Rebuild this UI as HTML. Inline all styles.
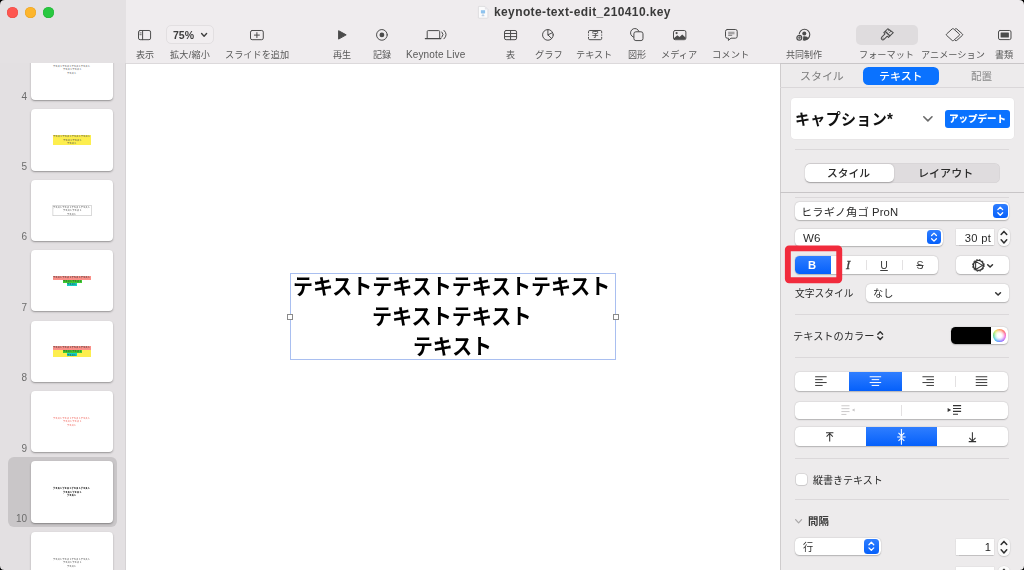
<!DOCTYPE html>
<html lang="ja"><head><meta charset="utf-8"><title>keynote-text-edit_210410.key</title>
<style>
html,body{margin:0;padding:0}
body{width:1024px;height:570px;position:relative;overflow:hidden;background:#fff;font-family:"Liberation Sans",sans-serif}
.sec{position:absolute;left:0;top:0;width:0;height:0}
.b{position:absolute;box-sizing:border-box}
.jt{position:absolute;display:block}
.jt svg{position:absolute;left:0;top:0;display:block;overflow:visible}
.jt svg text{font-family:"Liberation Sans","Noto Sans CJK JP",sans-serif;font-size:1000px;white-space:pre}
.lt{position:absolute;white-space:nowrap;display:block;will-change:transform}
.ic{position:absolute;display:block;overflow:visible}
.thumb{background:#fff;border-radius:4px;box-shadow:0 1px 2px rgba(0,0,0,.3),0 0.5px 0.5px rgba(0,0,0,.12)}
.pop{background:#fff;border-radius:4.5px;box-shadow:0 0.5px 1.3px rgba(0,0,0,.23),0 0 0 0.5px rgba(0,0,0,.05)}
.sep{background:#dbd8da;height:1px}
.blue{background:linear-gradient(#2f7eff,#0560fb)}

</style></head>
<body>
<div class="sec" id="navigator">
<div class="b " style="left:0.00px;top:0.00px;width:125.50px;height:570.00px;background:#e3e0e2;"></div>
<div class="b " style="left:125.00px;top:63.00px;width:0.80px;height:507.00px;background:#d6d3d5;"></div>
<div class="b " style="left:8.20px;top:456.80px;width:108.70px;height:70.00px;background:#c9c6c8;border-radius:6px;"></div>
<div class="b thumb" style="left:31.30px;top:38.90px;width:81.40px;height:61.30px;"></div>
<span class="lt" style="top:91px;font-size:10.00px;line-height:11px;height:11px;color:#6c6c6c;font-weight:400;left:-372.60px;width:400px;text-align:right;">4</span>
<span class="jt" style="left:53.26px;top:64.77px;width:37.60px;height:3.06px;"><svg width="37.60" height="3.06" viewBox="0 -950 16000 1300" preserveAspectRatio="none" fill="#555"><text x="0" y="0" font-size="1000" font-weight="500">テキストテキストテキストテキスト</text></svg></span>
<span class="jt" style="left:62.66px;top:68.47px;width:18.80px;height:3.06px;"><svg width="18.80" height="3.06" viewBox="0 -950 8000 1300" preserveAspectRatio="none" fill="#555"><text x="0" y="0" font-size="1000" font-weight="500">テキストテキスト</text></svg></span>
<span class="jt" style="left:67.36px;top:71.97px;width:9.40px;height:3.06px;"><svg width="9.40" height="3.06" viewBox="0 -950 4000 1300" preserveAspectRatio="none" fill="#555"><text x="0" y="0" font-size="1000" font-weight="500">テキスト</text></svg></span>
<div class="b thumb" style="left:31.30px;top:109.30px;width:81.40px;height:61.30px;"></div>
<span class="lt" style="top:161px;font-size:10.00px;line-height:11px;height:11px;color:#6c6c6c;font-weight:400;left:-372.60px;width:400px;text-align:right;">5</span>
<div class="b " style="left:53.10px;top:135.20px;width:38.20px;height:10.10px;background:#fdee4e;"></div>
<span class="jt" style="left:53.26px;top:135.17px;width:37.60px;height:3.06px;"><svg width="37.60" height="3.06" viewBox="0 -950 16000 1300" preserveAspectRatio="none" fill="#444"><text x="0" y="0" font-size="1000" font-weight="500">テキストテキストテキストテキスト</text></svg></span>
<span class="jt" style="left:62.66px;top:138.87px;width:18.80px;height:3.06px;"><svg width="18.80" height="3.06" viewBox="0 -950 8000 1300" preserveAspectRatio="none" fill="#444"><text x="0" y="0" font-size="1000" font-weight="500">テキストテキスト</text></svg></span>
<span class="jt" style="left:67.36px;top:142.37px;width:9.40px;height:3.06px;"><svg width="9.40" height="3.06" viewBox="0 -950 4000 1300" preserveAspectRatio="none" fill="#444"><text x="0" y="0" font-size="1000" font-weight="500">テキスト</text></svg></span>
<div class="b thumb" style="left:31.30px;top:179.70px;width:81.40px;height:61.30px;"></div>
<span class="lt" style="top:231px;font-size:10.00px;line-height:11px;height:11px;color:#6c6c6c;font-weight:400;left:-372.60px;width:400px;text-align:right;">6</span>
<svg class="ic" style="left:0.00px;top:0.00px;" width="1024.00" height="570.00" viewBox="0 0 1024 570"><rect x="52.9" y="205.60" width="38.5" height="10.1" fill="none" stroke="#c2c2c2" stroke-width="0.6"/></svg>
<span class="jt" style="left:53.26px;top:205.57px;width:37.60px;height:3.06px;"><svg width="37.60" height="3.06" viewBox="0 -950 16000 1300" preserveAspectRatio="none" fill="#555"><text x="0" y="0" font-size="1000" font-weight="500">テキストテキストテキストテキスト</text></svg></span>
<span class="jt" style="left:62.66px;top:209.27px;width:18.80px;height:3.06px;"><svg width="18.80" height="3.06" viewBox="0 -950 8000 1300" preserveAspectRatio="none" fill="#555"><text x="0" y="0" font-size="1000" font-weight="500">テキストテキスト</text></svg></span>
<span class="jt" style="left:67.36px;top:212.77px;width:9.40px;height:3.06px;"><svg width="9.40" height="3.06" viewBox="0 -950 4000 1300" preserveAspectRatio="none" fill="#555"><text x="0" y="0" font-size="1000" font-weight="500">テキスト</text></svg></span>
<div class="b thumb" style="left:31.30px;top:250.10px;width:81.40px;height:61.30px;"></div>
<span class="lt" style="top:302px;font-size:10.00px;line-height:11px;height:11px;color:#6c6c6c;font-weight:400;left:-372.60px;width:400px;text-align:right;">7</span>
<div class="b " style="left:53.40px;top:275.90px;width:37.30px;height:3.70px;background:#fb8f88;"></div>
<div class="b " style="left:62.70px;top:279.60px;width:19.00px;height:3.50px;background:#3fce32;"></div>
<div class="b " style="left:67.30px;top:283.10px;width:9.60px;height:2.60px;background:#15cfc4;"></div>
<span class="jt" style="left:53.26px;top:275.97px;width:37.60px;height:3.06px;"><svg width="37.60" height="3.06" viewBox="0 -950 16000 1300" preserveAspectRatio="none" fill="#333"><text x="0" y="0" font-size="1000" font-weight="500">テキストテキストテキストテキスト</text></svg></span>
<span class="jt" style="left:62.66px;top:279.67px;width:18.80px;height:3.06px;"><svg width="18.80" height="3.06" viewBox="0 -950 8000 1300" preserveAspectRatio="none" fill="#333"><text x="0" y="0" font-size="1000" font-weight="500">テキストテキスト</text></svg></span>
<span class="jt" style="left:67.36px;top:283.17px;width:9.40px;height:3.06px;"><svg width="9.40" height="3.06" viewBox="0 -950 4000 1300" preserveAspectRatio="none" fill="#333"><text x="0" y="0" font-size="1000" font-weight="500">テキスト</text></svg></span>
<div class="b thumb" style="left:31.30px;top:320.50px;width:81.40px;height:61.30px;"></div>
<span class="lt" style="top:372px;font-size:10.00px;line-height:11px;height:11px;color:#6c6c6c;font-weight:400;left:-372.60px;width:400px;text-align:right;">8</span>
<div class="b " style="left:53.10px;top:345.90px;width:38.20px;height:11.00px;background:#fdee4e;"></div>
<div class="b " style="left:53.40px;top:345.90px;width:37.30px;height:3.70px;background:#fb8f88;"></div>
<div class="b " style="left:62.70px;top:349.60px;width:19.00px;height:3.50px;background:#3fce32;"></div>
<div class="b " style="left:67.30px;top:353.10px;width:9.60px;height:2.60px;background:#15cfc4;"></div>
<span class="jt" style="left:53.26px;top:346.37px;width:37.60px;height:3.06px;"><svg width="37.60" height="3.06" viewBox="0 -950 16000 1300" preserveAspectRatio="none" fill="#333"><text x="0" y="0" font-size="1000" font-weight="500">テキストテキストテキストテキスト</text></svg></span>
<span class="jt" style="left:62.66px;top:350.07px;width:18.80px;height:3.06px;"><svg width="18.80" height="3.06" viewBox="0 -950 8000 1300" preserveAspectRatio="none" fill="#333"><text x="0" y="0" font-size="1000" font-weight="500">テキストテキスト</text></svg></span>
<span class="jt" style="left:67.36px;top:353.57px;width:9.40px;height:3.06px;"><svg width="9.40" height="3.06" viewBox="0 -950 4000 1300" preserveAspectRatio="none" fill="#333"><text x="0" y="0" font-size="1000" font-weight="500">テキスト</text></svg></span>
<div class="b thumb" style="left:31.30px;top:390.90px;width:81.40px;height:61.30px;"></div>
<span class="lt" style="top:443px;font-size:10.00px;line-height:11px;height:11px;color:#6c6c6c;font-weight:400;left:-372.60px;width:400px;text-align:right;">9</span>
<span class="jt" style="left:53.26px;top:416.77px;width:37.60px;height:3.06px;"><svg width="37.60" height="3.06" viewBox="0 -950 16000 1300" preserveAspectRatio="none" fill="#f0655c"><text x="0" y="0" font-size="1000" font-weight="500">テキストテキストテキストテキスト</text></svg></span>
<span class="jt" style="left:62.66px;top:420.47px;width:18.80px;height:3.06px;"><svg width="18.80" height="3.06" viewBox="0 -950 8000 1300" preserveAspectRatio="none" fill="#f0655c"><text x="0" y="0" font-size="1000" font-weight="500">テキストテキスト</text></svg></span>
<span class="jt" style="left:67.36px;top:423.97px;width:9.40px;height:3.06px;"><svg width="9.40" height="3.06" viewBox="0 -950 4000 1300" preserveAspectRatio="none" fill="#f0655c"><text x="0" y="0" font-size="1000" font-weight="500">テキスト</text></svg></span>
<div class="b thumb" style="left:31.30px;top:461.30px;width:81.40px;height:61.30px;"></div>
<span class="lt" style="top:513px;font-size:10.00px;line-height:11px;height:11px;color:#6c6c6c;font-weight:400;left:-372.60px;width:400px;text-align:right;">10</span>
<span class="jt" style="left:53.25px;top:487.17px;width:37.60px;height:3.06px;"><svg width="37.60" height="3.06" viewBox="0 -950 16000 1300" preserveAspectRatio="none" fill="#000"><text x="0" y="0" font-size="1000" font-weight="900">テキストテキストテキストテキスト</text></svg></span>
<span class="jt" style="left:62.65px;top:490.87px;width:18.80px;height:3.06px;"><svg width="18.80" height="3.06" viewBox="0 -950 8000 1300" preserveAspectRatio="none" fill="#000"><text x="0" y="0" font-size="1000" font-weight="900">テキストテキスト</text></svg></span>
<span class="jt" style="left:67.35px;top:494.37px;width:9.40px;height:3.06px;"><svg width="9.40" height="3.06" viewBox="0 -950 4000 1300" preserveAspectRatio="none" fill="#000"><text x="0" y="0" font-size="1000" font-weight="900">テキスト</text></svg></span>
<div class="b thumb" style="left:31.30px;top:531.70px;width:81.40px;height:61.30px;"></div>
<span class="jt" style="left:53.26px;top:557.57px;width:37.60px;height:3.06px;"><svg width="37.60" height="3.06" viewBox="0 -950 16000 1300" preserveAspectRatio="none" fill="#555"><text x="0" y="0" font-size="1000" font-weight="500">テキストテキストテキストテキスト</text></svg></span>
<span class="jt" style="left:62.66px;top:561.27px;width:18.80px;height:3.06px;"><svg width="18.80" height="3.06" viewBox="0 -950 8000 1300" preserveAspectRatio="none" fill="#555"><text x="0" y="0" font-size="1000" font-weight="500">テキストテキスト</text></svg></span>
<span class="jt" style="left:67.36px;top:564.77px;width:9.40px;height:3.06px;"><svg width="9.40" height="3.06" viewBox="0 -950 4000 1300" preserveAspectRatio="none" fill="#555"><text x="0" y="0" font-size="1000" font-weight="500">テキスト</text></svg></span>
</div>
<div class="sec" id="canvas">
<div class="b " style="left:290.30px;top:273.00px;width:325.30px;height:87.00px;border:1px solid #a9bff0;"></div>
<div class="b " style="left:287.40px;top:313.90px;width:5.90px;height:5.90px;background:#fff;border:0.8px solid #8a8a8a;"></div>
<div class="b " style="left:612.70px;top:313.90px;width:5.90px;height:5.90px;background:#fff;border:0.8px solid #8a8a8a;"></div>
<span class="jt" style="left:292.70px;top:273.98px;width:319.72px;height:27.94px;"><svg width="319.72" height="27.94" viewBox="0 -950 16000 1300" preserveAspectRatio="none" fill="#000"><text x="0" y="0" font-size="1000" font-weight="700">テキストテキストテキストテキスト</text></svg></span>
<span class="jt" style="left:372.24px;top:304.08px;width:160.84px;height:27.94px;"><svg width="160.84" height="27.94" viewBox="0 -950 8000 1300" preserveAspectRatio="none" fill="#000"><text x="0" y="0" font-size="1000" font-weight="700">テキストテキスト</text></svg></span>
<span class="jt" style="left:412.61px;top:334.18px;width:79.49px;height:27.94px;"><svg width="79.49" height="27.94" viewBox="0 -950 4000 1300" preserveAspectRatio="none" fill="#000"><text x="0" y="0" font-size="1000" font-weight="700">テキスト</text></svg></span>
</div>
<div class="sec" id="toolbar">
<div class="b " style="left:125.50px;top:0.00px;width:898.50px;height:63.00px;background:#efecee;"></div>
<div class="b " style="left:0.00px;top:0.00px;width:125.50px;height:63.00px;background:#e4e1e3;"></div>
<div class="b " style="left:125.50px;top:62.70px;width:654.50px;height:0.90px;background:#dcd9db;"></div>
<div class="b " style="left:7.00px;top:7.00px;width:11.00px;height:11.00px;background:#fe5650;border-radius:50%;box-shadow:inset 0 0 0 0.5px #ec4a44;"></div>
<div class="b " style="left:25.00px;top:7.00px;width:11.00px;height:11.00px;background:#fdb52c;border-radius:50%;box-shadow:inset 0 0 0 0.5px #e9a222;"></div>
<div class="b " style="left:43.10px;top:7.00px;width:11.00px;height:11.00px;background:#28c840;border-radius:50%;box-shadow:inset 0 0 0 0.5px #20b234;"></div>
<svg class="ic" style="left:138.10px;top:29.60px;" width="13.10" height="10.20" viewBox="0 0 13.1 10.2"><rect x="0.5" y="0.5" width="12.1" height="9.2" rx="1.6" fill="none" stroke="#4b4b4b" stroke-width="1" stroke-linecap="round" stroke-linejoin="round"/><path d="M4.6 0.5V9.7" fill="none" stroke="#4b4b4b" stroke-width="1" stroke-linecap="round" stroke-linejoin="round"/><path d="M1.9 2.9h1.3M1.9 4.7h1.3" fill="none" stroke="#4b4b4b" stroke-width="0.8" stroke-linecap="round" stroke-linejoin="round"/></svg>
<span class="jt" style="left:136.10px;top:49.20px;width:18.20px;height:11.83px;"><svg width="18.20" height="11.83" viewBox="0 -950 2000 1300" preserveAspectRatio="none" fill="#585858"><text x="0" y="0" font-size="1000" font-weight="400">表示</text></svg></span>
<div class="b " style="left:165.50px;top:25.40px;width:48.40px;height:19.10px;border:1px solid #e2dfe1;border-radius:5px;background:#f1eef0;"></div>
<span class="lt" style="top:29px;font-size:10.50px;line-height:12px;height:12px;color:#3e3e3e;font-weight:700;left:173.00px;">75%</span>
<svg class="ic" style="left:201.30px;top:33.40px;" width="6.20" height="3.90" viewBox="0 0 6.2 3.9"><path d="M0.6 0.6L3.1 3.2L5.6 0.6" fill="none" stroke="#3e3e3e" stroke-width="1.4" stroke-linecap="round" stroke-linejoin="round"/></svg>
<span class="jt" style="left:169.77px;top:49.20px;width:39.92px;height:11.83px;"><svg width="39.92" height="11.83" viewBox="0 -950 4390 1300" preserveAspectRatio="none" fill="#585858"><text x="0" y="0" font-size="1000" font-weight="400" textLength="4390" lengthAdjust="spacing">拡大/縮小</text></svg></span>
<svg class="ic" style="left:250.30px;top:29.60px;" width="13.80" height="10.20" viewBox="0 0 13.8 10.2"><rect x="0.5" y="0.5" width="12.8" height="9.2" rx="1.6" fill="none" stroke="#4b4b4b" stroke-width="1" stroke-linecap="round" stroke-linejoin="round"/><path d="M4.4 5.1h5M6.9 2.6v5" fill="none" stroke="#4b4b4b" stroke-width="1" stroke-linecap="round" stroke-linejoin="round"/></svg>
<span class="jt" style="left:225.45px;top:49.20px;width:64.22px;height:11.83px;"><svg width="64.22" height="11.83" viewBox="0 -950 7000 1300" preserveAspectRatio="none" fill="#585858"><text x="0" y="0" font-size="1000" font-weight="400">スライドを追加</text></svg></span>
<svg class="ic" style="left:338.00px;top:30.10px;" width="9.00" height="9.80" viewBox="0 0 9 9.8"><path d="M0.6 0.7L8.2 4.85L0.6 9.1Z" fill="#4b4b4b" stroke="#4b4b4b" stroke-width="1" stroke-linejoin="round"/></svg>
<span class="jt" style="left:332.61px;top:49.20px;width:18.20px;height:11.83px;"><svg width="18.20" height="11.83" viewBox="0 -950 2000 1300" preserveAspectRatio="none" fill="#585858"><text x="0" y="0" font-size="1000" font-weight="400">再生</text></svg></span>
<svg class="ic" style="left:375.90px;top:28.90px;" width="11.80" height="11.80" viewBox="0 0 11.8 11.8"><circle cx="5.9" cy="5.9" r="5.35" fill="none" stroke="#4b4b4b" stroke-width="1" stroke-linecap="round" stroke-linejoin="round"/><circle cx="5.9" cy="5.9" r="2.4" fill="#4b4b4b"/></svg>
<span class="jt" style="left:372.98px;top:49.20px;width:18.20px;height:11.83px;"><svg width="18.20" height="11.83" viewBox="0 -950 2000 1300" preserveAspectRatio="none" fill="#585858"><text x="0" y="0" font-size="1000" font-weight="400">記録</text></svg></span>
<svg class="ic" style="left:425.30px;top:29.90px;" width="22.00" height="9.50" viewBox="0 0 22 9.5"><path d="M2.2 7.9V1.6Q2.2 0.6 3.2 0.6H13.7Q14.7 0.6 14.7 1.6V7.9" fill="none" stroke="#4b4b4b" stroke-width="1" stroke-linecap="round" stroke-linejoin="round"/><path d="M0.3 8.6H15.9" fill="none" stroke="#4b4b4b" stroke-width="1.1" stroke-linecap="round" stroke-linejoin="round"/><path d="M16.9 2.0Q19.4 4.6 16.9 7.2" fill="none" stroke="#4b4b4b" stroke-width="1" stroke-linecap="round" stroke-linejoin="round"/><path d="M19.0 0.4Q23.4 4.6 19.0 8.8" fill="none" stroke="#4b4b4b" stroke-width="1" stroke-linecap="round" stroke-linejoin="round"/></svg>
<span class="lt" style="top:49px;font-size:10.00px;line-height:11px;height:11px;color:#585858;font-weight:400;letter-spacing:0.130px;left:406.00px;">Keynote Live</span>
<svg class="ic" style="left:504.10px;top:29.60px;" width="13.10" height="10.20" viewBox="0 0 13.1 10.2"><rect x="0.5" y="0.5" width="12.1" height="9.2" rx="1.6" fill="none" stroke="#4b4b4b" stroke-width="1" stroke-linecap="round" stroke-linejoin="round"/><path d="M0.5 3.5H12.6M0.5 6.6H12.6M6.55 0.5V9.7" fill="none" stroke="#4b4b4b" stroke-width="1" stroke-linecap="round" stroke-linejoin="round"/></svg>
<span class="jt" style="left:505.97px;top:49.20px;width:9.10px;height:11.83px;"><svg width="9.10" height="11.83" viewBox="0 -950 1000 1300" preserveAspectRatio="none" fill="#585858"><text x="0" y="0" font-size="1000" font-weight="400">表</text></svg></span>
<svg class="ic" style="left:542.00px;top:28.90px;" width="11.80" height="11.80" viewBox="0 0 11.8 11.8"><circle cx="5.9" cy="5.9" r="5.35" fill="none" stroke="#4b4b4b" stroke-width="1" stroke-linecap="round" stroke-linejoin="round"/><path d="M5.9 0.6V5.9L9.7 9.6M5.9 5.9L10.6 3.6" fill="none" stroke="#4b4b4b" stroke-width="1" stroke-linecap="round" stroke-linejoin="round"/></svg>
<span class="jt" style="left:534.72px;top:49.20px;width:27.69px;height:11.83px;"><svg width="27.69" height="11.83" viewBox="0 -950 3000 1300" preserveAspectRatio="none" fill="#585858"><text x="0" y="0" font-size="1000" font-weight="400">グラフ</text></svg></span>
<svg class="ic" style="left:587.80px;top:29.60px;" width="14.20" height="10.20" viewBox="0 0 14.2 10.2"><path d="M0.5 2.9V1.8Q0.5 0.5 1.8 0.5H12.4Q13.7 0.5 13.7 1.8V2.9M0.5 7.3V8.4Q0.5 9.7 1.8 9.7H12.4Q13.7 9.7 13.7 8.4V7.3M0.5 4.9V5.3M13.7 4.9V5.3" fill="none" stroke="#4b4b4b" stroke-width="1" stroke-linecap="round" stroke-linejoin="round"/></svg>
<span class="jt" style="left:591.59px;top:31.33px;width:6.60px;height:8.58px;"><svg width="6.60" height="8.58" viewBox="0 -950 1000 1300" preserveAspectRatio="none" fill="#4b4b4b"><text x="0" y="0" font-size="1000" font-weight="700">字</text></svg></span>
<span class="jt" style="left:576.36px;top:49.20px;width:36.58px;height:11.83px;"><svg width="36.58" height="11.83" viewBox="0 -950 4000 1300" preserveAspectRatio="none" fill="#585858"><text x="0" y="0" font-size="1000" font-weight="400">テキスト</text></svg></span>
<svg class="ic" style="left:630.40px;top:27.60px;" width="13.60" height="13.20" viewBox="0 0 13.6 13.2"><circle cx="4.9" cy="4.9" r="4.35" fill="none" stroke="#4b4b4b" stroke-width="1" stroke-linecap="round" stroke-linejoin="round"/><rect x="3.9" y="3.8" width="9.1" height="8.8" rx="2" fill="#efecee" stroke="#4b4b4b" stroke-width="1"/></svg>
<span class="jt" style="left:628.35px;top:49.20px;width:18.20px;height:11.83px;"><svg width="18.20" height="11.83" viewBox="0 -950 2000 1300" preserveAspectRatio="none" fill="#585858"><text x="0" y="0" font-size="1000" font-weight="400">図形</text></svg></span>
<svg class="ic" style="left:673.00px;top:29.60px;" width="13.40" height="10.20" viewBox="0 0 13.4 10.2"><rect x="0.5" y="0.5" width="12.4" height="9.2" rx="1.6" fill="none" stroke="#4b4b4b" stroke-width="1" stroke-linecap="round" stroke-linejoin="round"/><path d="M0.9 8.2L4.3 5.2L6.6 7L9.2 4.6L12.5 7.6V9.2H0.9Z" fill="#4b4b4b"/><circle cx="3.6" cy="3.1" r="1.1" fill="#4b4b4b"/></svg>
<span class="jt" style="left:661.09px;top:49.20px;width:36.87px;height:11.83px;"><svg width="36.87" height="11.83" viewBox="0 -950 4000 1300" preserveAspectRatio="none" fill="#585858"><text x="0" y="0" font-size="1000" font-weight="400">メディア</text></svg></span>
<svg class="ic" style="left:724.60px;top:29.20px;" width="12.80" height="11.40" viewBox="0 0 12.8 11.4"><path d="M2.3 0.5H10.4Q12.2 0.5 12.2 2.3V7.4Q12.2 9.2 10.4 9.2H6.0L3.4 11.4V9.2H2.3Q0.5 9.2 0.5 7.4V2.3Q0.5 0.5 2.3 0.5Z" fill="none" stroke="#4b4b4b" stroke-width="1" stroke-linecap="round" stroke-linejoin="round"/><path d="M3.2 3.2H9.5M3.2 4.8H9.5M3.2 6.4H7.2" fill="none" stroke="#8d8b8c" stroke-width="1.1"/></svg>
<span class="jt" style="left:712.16px;top:49.20px;width:37.30px;height:11.83px;"><svg width="37.30" height="11.83" viewBox="0 -950 4000 1300" preserveAspectRatio="none" fill="#585858"><text x="0" y="0" font-size="1000" font-weight="400">コメント</text></svg></span>
<svg class="ic" style="left:796.00px;top:28.90px;" width="14.60" height="12.60" viewBox="0 0 14.6 12.6"><circle cx="8.5" cy="5.6" r="5.3" fill="none" stroke="#4b4b4b" stroke-width="1.1" stroke-linecap="round" stroke-linejoin="round"/><circle cx="8.3" cy="4.4" r="2.0" fill="#4b4b4b"/><path d="M4.3 9.5Q5.6 7.3 8.5 7.3Q11.4 7.3 12.7 9.5Q11.0 11.5 8.5 11.5Q6.0 11.5 4.3 9.5Z" fill="#4b4b4b"/><circle cx="3.3" cy="8.8" r="3.9" fill="#efecee"/><circle cx="3.3" cy="8.8" r="2.45" fill="none" stroke="#4b4b4b" stroke-width="1.2" stroke-linecap="round" stroke-linejoin="round"/><path d="M2.0 8.8H4.6M3.3 7.5V10.1" fill="none" stroke="#4b4b4b" stroke-width="0.8" stroke-linecap="round" stroke-linejoin="round"/></svg>
<span class="jt" style="left:785.98px;top:49.20px;width:36.04px;height:11.83px;"><svg width="36.04" height="11.83" viewBox="0 -950 4000 1300" preserveAspectRatio="none" fill="#585858"><text x="0" y="0" font-size="1000" font-weight="400">共同制作</text></svg></span>
<div class="b " style="left:856.20px;top:25.00px;width:61.60px;height:19.90px;background:#dfdcde;border-radius:5px;"></div>
<svg class="ic" style="left:880.30px;top:27.80px;" width="13.00" height="13.40" viewBox="0 0 13 13.4"><g transform="rotate(45 6.5 6.7)"><path d="M3.2 1.6L9.8 0.4V5.2H3.2Z" fill="none" stroke="#4b4b4b" stroke-width="1" stroke-linecap="round" stroke-linejoin="round"/><path d="M5.2 1.4V2.8M7.2 1.0V3.4" fill="none" stroke="#4b4b4b" stroke-width="0.8" stroke-linecap="round" stroke-linejoin="round"/><path d="M3.2 5.2H9.8V7.2H8.1V11.8Q8.1 13.4 6.5 13.4Q4.9 13.4 4.9 11.8V7.2H3.2Z" fill="none" stroke="#4b4b4b" stroke-width="1" stroke-linecap="round" stroke-linejoin="round"/><circle cx="6.5" cy="11.6" r="0.55" fill="#4b4b4b"/></g></svg>
<span class="jt" style="left:859.11px;top:49.20px;width:55.03px;height:11.83px;"><svg width="55.03" height="11.83" viewBox="0 -950 6000 1300" preserveAspectRatio="none" fill="#585858"><text x="0" y="0" font-size="1000" font-weight="400">フォーマット</text></svg></span>
<svg class="ic" style="left:945.60px;top:28.10px;" width="17.40" height="13.40" viewBox="0 0 17.4 13.4"><path d="M9.3 0.9Q10 0.3 10.7 0.9L16.4 6Q17.1 6.7 16.4 7.4L10.7 12.5Q10 13.1 9.3 12.5" fill="none" stroke="#4b4b4b" stroke-width="1" stroke-linecap="round" stroke-linejoin="round"/><path d="M6.2 0.9Q6.9 0.3 7.6 0.9L13.3 6Q14 6.7 13.3 7.4L7.6 12.5Q6.9 13.1 6.2 12.5L0.6 7.4Q-0.1 6.7 0.6 6Z" fill="#efecee" stroke="#4b4b4b" stroke-width="1" stroke-linejoin="round"/></svg>
<span class="jt" style="left:921.09px;top:49.20px;width:64.27px;height:11.83px;"><svg width="64.27" height="11.83" viewBox="0 -950 7000 1300" preserveAspectRatio="none" fill="#585858"><text x="0" y="0" font-size="1000" font-weight="400">アニメーション</text></svg></span>
<svg class="ic" style="left:998.10px;top:30.10px;" width="13.50" height="10.10" viewBox="0 0 13.5 10.1"><rect x="0.5" y="0.5" width="12.5" height="9.1" rx="1.5" fill="none" stroke="#4b4b4b" stroke-width="1" stroke-linecap="round" stroke-linejoin="round"/><rect x="2.6" y="2.6" width="8.3" height="4.9" rx="0.5" fill="#4b4b4b"/></svg>
<span class="jt" style="left:994.75px;top:49.20px;width:18.20px;height:11.83px;"><svg width="18.20" height="11.83" viewBox="0 -950 2000 1300" preserveAspectRatio="none" fill="#585858"><text x="0" y="0" font-size="1000" font-weight="400">書類</text></svg></span>
<svg class="ic" style="left:478.20px;top:6.20px;" width="10.40" height="12.60" viewBox="0 0 10.4 12.6"><path d="M1 0.4H6.9L9.9 3.4V11.6Q9.9 12.2 9.3 12.2H1Q0.4 12.2 0.4 11.6V1Q0.4 0.4 1 0.4Z" fill="#fbfbfc" stroke="#d0cfd2" stroke-width="0.6"/><path d="M6.9 0.4V3.4H9.9Z" fill="#e4e4e8"/><rect x="2.9" y="4.2" width="4.2" height="3.2" fill="#8fc3ee"/><path d="M5 7.4V9.6M3.6 9.7H6.4" stroke="#9bb7d6" stroke-width="0.7" fill="none"/></svg>
<span class="lt" style="top:5px;font-size:12.00px;line-height:14px;height:14px;color:#3a3a3a;font-weight:700;letter-spacing:0.385px;left:494.20px;">keynote-text-edit_210410.key</span>
</div>
<div class="sec" id="inspector">
<div class="b " style="left:780.00px;top:63.00px;width:244.00px;height:507.00px;background:#edebec;"></div>
<div class="b " style="left:779.60px;top:63.00px;width:1.00px;height:507.00px;background:#cfcccd;"></div>
<div class="b " style="left:780.00px;top:62.60px;width:244.00px;height:1.00px;background:#c9c6c8;"></div>
<span class="jt" style="left:799.95px;top:69.83px;width:43.92px;height:13.78px;"><svg width="43.92" height="13.78" viewBox="0 -950 4000 1300" preserveAspectRatio="none" fill="#7b7b7b"><text x="0" y="0" font-size="1000" font-weight="400">スタイル</text></svg></span>
<div class="b " style="left:863.40px;top:66.60px;width:75.90px;height:18.40px;background:#0a72ff;border-radius:5.5px;"></div>
<span class="jt" style="left:879.20px;top:69.83px;width:43.97px;height:13.78px;"><svg width="43.97" height="13.78" viewBox="0 -950 4000 1300" preserveAspectRatio="none" fill="#fff"><text x="0" y="0" font-size="1000" font-weight="500">テキスト</text></svg></span>
<span class="jt" style="left:971.01px;top:69.83px;width:21.20px;height:13.78px;"><svg width="21.20" height="13.78" viewBox="0 -950 2000 1300" preserveAspectRatio="none" fill="#8a8a8a"><text x="0" y="0" font-size="1000" font-weight="400">配置</text></svg></span>
<div class="b " style="left:780.00px;top:87.40px;width:244.00px;height:1.00px;background:#dad7d9;"></div>
<div class="b " style="left:790.70px;top:98.20px;width:223.40px;height:40.60px;background:#fff;border-radius:4px;box-shadow:0 0 0 0.5px rgba(0,0,0,.04);"></div>
<span class="jt" style="left:794.73px;top:109.78px;width:97.93px;height:20.28px;"><svg width="97.93" height="20.28" viewBox="0 -950 6507 1300" preserveAspectRatio="none" fill="#111"><text x="0" y="0" font-size="1000" font-weight="700" textLength="6507" lengthAdjust="spacing">キャプション*</text></svg></span>
<svg class="ic" style="left:923.40px;top:116.20px;" width="9.80" height="5.80" viewBox="0 0 9.8 5.8"><path d="M0.8 0.8L4.9 4.9L9.0 0.8" fill="none" stroke="#6a6a6a" stroke-width="1.6" stroke-linecap="round" stroke-linejoin="round"/></svg>
<div class="b " style="left:945.40px;top:109.60px;width:64.20px;height:18.00px;background:#0a72ff;border-radius:3px;"></div>
<span class="jt" style="left:948.86px;top:113.28px;width:57.24px;height:12.48px;"><svg width="57.24" height="12.48" viewBox="0 -950 6000 1300" preserveAspectRatio="none" fill="#fff"><text x="0" y="0" font-size="1000" font-weight="800">アップデート</text></svg></span>
<div class="b sep" style="left:795.20px;top:149.00px;width:214.30px;height:1.00px;"></div>
<div class="b " style="left:804.50px;top:163.40px;width:195.20px;height:19.40px;background:#dfdcde;border-radius:5.5px;box-shadow:inset 0 0 0 0.5px rgba(0,0,0,.05);"></div>
<div class="b " style="left:805.00px;top:163.90px;width:88.60px;height:18.40px;background:#fff;border-radius:5px;box-shadow:0 0.5px 1.5px rgba(0,0,0,.25);"></div>
<span class="jt" style="left:826.54px;top:166.53px;width:43.20px;height:13.78px;"><svg width="43.20" height="13.78" viewBox="0 -950 4000 1300" preserveAspectRatio="none" fill="#2b2b2b"><text x="0" y="0" font-size="1000" font-weight="500">スタイル</text></svg></span>
<span class="jt" style="left:918.27px;top:166.53px;width:55.31px;height:13.78px;"><svg width="55.31" height="13.78" viewBox="0 -950 5000 1300" preserveAspectRatio="none" fill="#2b2b2b"><text x="0" y="0" font-size="1000" font-weight="500">レイアウト</text></svg></span>
<div class="b " style="left:780.00px;top:191.80px;width:244.00px;height:1.00px;background:#c8c5c7;"></div>
<div class="b sep" style="left:795.20px;top:197.20px;width:214.30px;height:1.00px;"></div>
<div class="b pop" style="left:795.00px;top:202.00px;width:213.90px;height:18.00px;"></div>
<span class="jt" style="left:800.82px;top:205.52px;width:97.09px;height:13.52px;"><svg width="97.09" height="13.52" viewBox="0 -950 8600 1300" preserveAspectRatio="none" fill="#2b2b2b"><text x="0" y="0" font-size="1000" font-weight="400" textLength="8600" lengthAdjust="spacing">ヒラギノ角ゴ ProN</text></svg></span>
<div class="b blue" style="left:993.30px;top:203.90px;width:14.50px;height:14.40px;border-radius:3.5px;"></div>
<svg class="ic" style="left:993.30px;top:203.90px;" width="14.50" height="14.40" viewBox="0 0 14.5 14.4"><path d="M4.85 5.60L7.25 3.20L9.65 5.60M4.85 8.80L7.25 11.20L9.65 8.80" fill="none" stroke="#fff" stroke-width="1.3" stroke-linecap="round" stroke-linejoin="round"/></svg>
<div class="b pop" style="left:795.00px;top:228.60px;width:147.50px;height:17.10px;"></div>
<span class="lt" style="top:232px;font-size:11.60px;line-height:12px;height:12px;color:#2b2b2b;font-weight:400;left:803.00px;">W6</span>
<div class="b blue" style="left:927.00px;top:229.90px;width:14.00px;height:14.30px;border-radius:3.5px;"></div>
<svg class="ic" style="left:927.00px;top:229.90px;" width="14.00" height="14.30" viewBox="0 0 14 14.3"><path d="M4.60 5.55L7.00 3.15L9.40 5.55M4.60 8.75L7.00 11.15L9.40 8.75" fill="none" stroke="#fff" stroke-width="1.3" stroke-linecap="round" stroke-linejoin="round"/></svg>
<div class="b " style="left:956.40px;top:228.80px;width:37.80px;height:16.40px;background:#fff;box-shadow:0 0 0 0.5px rgba(0,0,0,.06),0 0.5px 1px rgba(0,0,0,.16);"></div>
<span class="lt" style="top:232px;font-size:11.20px;line-height:12px;height:12px;color:#2b2b2b;font-weight:400;letter-spacing:0.250px;left:591.20px;width:400px;text-align:right;">30 pt</span>
<div class="b " style="left:997.90px;top:228.10px;width:11.90px;height:17.80px;background:#fbfbfb;border-radius:5.5px;box-shadow:0 0.5px 1.2px rgba(0,0,0,.26),0 0 0 0.5px rgba(0,0,0,.04);"></div>
<svg class="ic" style="left:997.90px;top:228.10px;" width="11.90" height="17.80" viewBox="0 0 11.9 17.8"><path d="M3.15 6.50L5.95 3.40L8.75 6.50M3.15 11.80L5.95 14.90L8.75 11.80" fill="none" stroke="#2e2e2e" stroke-width="1.5" stroke-linecap="round" stroke-linejoin="round"/></svg>
<div class="b pop" style="left:794.80px;top:256.00px;width:143.20px;height:18.10px;"></div>
<div class="b blue" style="left:794.80px;top:256.00px;width:36.20px;height:18.10px;border-radius:4.5px 0 0 4.5px;"></div>
<span class="lt" style="top:259px;font-size:11.20px;line-height:12px;height:12px;color:#fff;font-weight:700;left:612.30px;width:400px;text-align:center;">B</span>
<span class="lt" style="top:258px;font-size:12.60px;line-height:14px;height:14px;color:#3c3c3c;font-weight:400;font-style:italic;left:648.00px;width:400px;text-align:center;font-family:'Liberation Serif',serif;-webkit-text-stroke:0.35px #3c3c3c;">I</span>
<span class="lt" style="top:259px;font-size:10.50px;line-height:12px;height:12px;color:#3c3c3c;font-weight:400;left:684.30px;width:400px;text-align:center;text-decoration:underline;text-underline-offset:1px;">U</span>
<span class="lt" style="top:259px;font-size:10.50px;line-height:12px;height:12px;color:#3c3c3c;font-weight:400;left:719.80px;width:400px;text-align:center;text-decoration:line-through;">S</span>
<div class="b " style="left:865.90px;top:259.60px;width:1.00px;height:10.80px;background:#e3e1e2;"></div>
<div class="b " style="left:902.00px;top:259.60px;width:1.00px;height:10.80px;background:#e3e1e2;"></div>
<div class="b pop" style="left:955.90px;top:256.20px;width:53.20px;height:18.00px;"></div>
<svg class="ic" style="left:971.90px;top:258.80px;" width="12.80" height="12.80" viewBox="0 0 12 12"><circle cx="6" cy="6" r="5.55" fill="none" stroke="#333" stroke-width="0.9" stroke-dasharray="1.45 1.456"/><circle cx="6" cy="6" r="4.7" fill="none" stroke="#333" stroke-width="1.3"/><path d="M3.4 2.2L9.9 6L3.4 9.8Z" fill="none" stroke="#333" stroke-width="1.0" stroke-linejoin="round"/></svg>
<svg class="ic" style="left:987.20px;top:263.50px;" width="6.20" height="3.90" viewBox="0 0 6.2 3.9"><path d="M0.7 0.7L3.1 3.1L5.5 0.7" fill="none" stroke="#333" stroke-width="1.5" stroke-linecap="round" stroke-linejoin="round"/></svg>
<svg class="ic" style="left:0.00px;top:0.00px;" width="1024.00" height="570.00" viewBox="0 0 1024 570"><rect x="787.85" y="248.4" width="51.4" height="31.85" rx="1.2" fill="none" stroke="#f12b3c" stroke-width="5.9"/></svg>
<span class="jt" style="left:795.15px;top:286.61px;width:58.58px;height:13.26px;"><svg width="58.58" height="13.26" viewBox="0 -950 6000 1300" preserveAspectRatio="none" fill="#2b2b2b"><text x="0" y="0" font-size="1000" font-weight="400">文字スタイル</text></svg></span>
<div class="b pop" style="left:865.80px;top:284.20px;width:143.30px;height:17.60px;"></div>
<span class="jt" style="left:872.51px;top:286.61px;width:20.39px;height:13.26px;"><svg width="20.39" height="13.26" viewBox="0 -950 2000 1300" preserveAspectRatio="none" fill="#2b2b2b"><text x="0" y="0" font-size="1000" font-weight="400">なし</text></svg></span>
<svg class="ic" style="left:994.70px;top:292.30px;" width="6.20" height="3.90" viewBox="0 0 6.2 3.9"><path d="M0.7 0.7L3.1 3.1L5.5 0.7" fill="none" stroke="#333" stroke-width="1.5" stroke-linecap="round" stroke-linejoin="round"/></svg>
<div class="b sep" style="left:795.20px;top:313.80px;width:214.30px;height:1.00px;"></div>
<span class="jt" style="left:792.65px;top:329.91px;width:81.88px;height:13.26px;"><svg width="81.88" height="13.26" viewBox="0 -950 8000 1300" preserveAspectRatio="none" fill="#2b2b2b"><text x="0" y="0" font-size="1000" font-weight="400">テキストのカラー</text></svg></span>
<svg class="ic" style="left:876.60px;top:331.40px;" width="6.40" height="9.40" viewBox="0 0 6.4 9.4"><path d="M0.8 3.3L3.2 0.8L5.6 3.3M0.8 6.1L3.2 8.6L5.6 6.1" fill="none" stroke="#333" stroke-width="1.4" stroke-linecap="round" stroke-linejoin="round"/></svg>
<div class="b pop" style="left:950.80px;top:326.50px;width:57.70px;height:17.90px;"></div>
<div class="b " style="left:950.80px;top:326.50px;width:39.80px;height:17.90px;background:#000;border-radius:4.5px 0 0 4.5px;"></div>
<div class="b " style="left:993.00px;top:329.10px;width:12.80px;height:12.80px;border-radius:50%;background:conic-gradient(from 0deg,#ff8a3c,#ff4a4a 12%,#f54ad0 27%,#9a55ff 40%,#4b78ff 52%,#35c8e8 64%,#4fdc6a 76%,#d8e640 88%,#ff8a3c);"></div>
<div class="b " style="left:993.00px;top:329.10px;width:12.80px;height:12.80px;border-radius:50%;background:radial-gradient(#fff 22%,rgba(255,255,255,.75) 42%,rgba(255,255,255,.15) 68%,rgba(255,255,255,0) 78%);"></div>
<div class="b sep" style="left:795.20px;top:357.00px;width:214.30px;height:1.00px;"></div>
<div class="b pop" style="left:794.90px;top:372.40px;width:212.90px;height:18.20px;"></div>
<div class="b blue" style="left:848.90px;top:372.40px;width:53.00px;height:18.20px;"></div>
<svg class="ic" style="left:0.00px;top:0.00px;" width="1024.00" height="570.00" viewBox="0 0 1024 570"><path d="M815.15 376.75h11.50M815.15 379.65h7.50M815.15 382.55h11.50M815.15 385.45h7.50" fill="none" stroke="#3c3c3c" stroke-width="1"/><path d="M869.65 376.75h11.50M871.65 379.65h7.50M869.65 382.55h11.50M871.65 385.45h7.50" fill="none" stroke="#fff" stroke-width="1"/><path d="M922.45 376.75h11.50M926.45 379.65h7.50M922.45 382.55h11.50M926.45 385.45h7.50" fill="none" stroke="#3c3c3c" stroke-width="1"/><path d="M975.75 376.75h11.50M975.75 379.65h11.50M975.75 382.55h11.50M975.75 385.45h11.50" fill="none" stroke="#3c3c3c" stroke-width="1"/></svg>
<div class="b " style="left:954.80px;top:376.20px;width:1.00px;height:10.60px;background:#e3e1e2;"></div>
<div class="b pop" style="left:794.90px;top:401.60px;width:212.90px;height:17.60px;"></div>
<div class="b " style="left:901.20px;top:405.00px;width:1.00px;height:10.60px;background:#e3e1e2;"></div>
<svg class="ic" style="left:0.00px;top:0.00px;" width="1024.00" height="570.00" viewBox="0 0 1024 570"><path d="M841.40 405.75h8.10M841.40 408.65h8.10M841.40 411.55h8.10M841.40 414.45h5.00" fill="none" stroke="#c6c4c5" stroke-width="0.9"/><path d="M851.8 410.0L854.6 408.4V411.6Z" fill="#c6c4c5"/><path d="M953.00 405.55h8.10M953.00 408.45h8.10M953.00 411.35h8.10M953.00 414.25h5.00" fill="none" stroke="#333" stroke-width="1.15"/><path d="M947.6 407.9L951.2 410.0L947.6 412.1Z" fill="#333"/></svg>
<div class="b pop" style="left:794.90px;top:427.40px;width:212.90px;height:18.40px;"></div>
<div class="b blue" style="left:866.10px;top:427.40px;width:71.20px;height:18.40px;"></div>
<svg class="ic" style="left:0.00px;top:0.00px;" width="1024.00" height="570.00" viewBox="0 0 1024 570"><path d="M826.00 432.8h7.4M829.70 433.4V441.4M826.60 436.6L829.70 433.5L832.80 436.6" fill="none" stroke="#333" stroke-width="1.05" stroke-linejoin="miter"/><path d="M897.20 436.9h8.4M901.40 429.0V444.8M898.50 432.9L901.40 435.9L904.30 432.9M898.50 440.9L901.40 437.9L904.30 440.9" fill="none" stroke="#fff" stroke-width="1.05" stroke-linejoin="miter"/><path d="M968.70 441.6h7.4M972.40 432.2V441.0M969.30 437.9L972.40 441.0L975.50 437.9" fill="none" stroke="#333" stroke-width="1.05" stroke-linejoin="miter"/></svg>
<div class="b sep" style="left:795.20px;top:457.60px;width:214.30px;height:1.00px;"></div>
<div class="b " style="left:795.50px;top:473.70px;width:11.90px;height:11.80px;background:#fff;border-radius:3px;box-shadow:0 0 0 0.6px rgba(0,0,0,.15),0 0.5px 1px rgba(0,0,0,.08);"></div>
<span class="jt" style="left:812.81px;top:473.71px;width:70.07px;height:13.26px;"><svg width="70.07" height="13.26" viewBox="0 -950 7000 1300" preserveAspectRatio="none" fill="#2b2b2b"><text x="0" y="0" font-size="1000" font-weight="400">縦書きテキスト</text></svg></span>
<div class="b sep" style="left:795.20px;top:498.70px;width:214.30px;height:1.00px;"></div>
<svg class="ic" style="left:794.60px;top:518.90px;" width="7.20" height="4.50" viewBox="0 0 7.2 4.5"><path d="M0.6 0.6L3.6 3.9L6.6 0.6" fill="none" stroke="#a9a7a8" stroke-width="1.2" stroke-linecap="round" stroke-linejoin="round"/></svg>
<span class="jt" style="left:807.87px;top:515.60px;width:20.90px;height:12.87px;"><svg width="20.90" height="12.87" viewBox="0 -950 2000 1300" preserveAspectRatio="none" fill="#3a3a3a"><text x="0" y="0" font-size="1000" font-weight="700">間隔</text></svg></span>
<div class="b pop" style="left:795.00px;top:537.90px;width:85.60px;height:17.20px;"></div>
<span class="jt" style="left:803.07px;top:541.01px;width:10.20px;height:13.26px;"><svg width="10.20" height="13.26" viewBox="0 -950 1000 1300" preserveAspectRatio="none" fill="#2b2b2b"><text x="0" y="0" font-size="1000" font-weight="400">行</text></svg></span>
<div class="b blue" style="left:864.20px;top:539.20px;width:14.70px;height:14.60px;border-radius:3.5px;"></div>
<svg class="ic" style="left:864.20px;top:539.20px;" width="14.70" height="14.60" viewBox="0 0 14.7 14.6"><path d="M4.95 5.70L7.35 3.30L9.75 5.70M4.95 8.90L7.35 11.30L9.75 8.90" fill="none" stroke="#fff" stroke-width="1.3" stroke-linecap="round" stroke-linejoin="round"/></svg>
<div class="b " style="left:956.40px;top:538.60px;width:37.80px;height:16.60px;background:#fff;box-shadow:0 0 0 0.5px rgba(0,0,0,.06),0 0.5px 1px rgba(0,0,0,.16);"></div>
<span class="lt" style="top:541px;font-size:11.20px;line-height:12px;height:12px;color:#222;font-weight:400;left:591.40px;width:400px;text-align:right;">1</span>
<div class="b " style="left:997.90px;top:538.30px;width:11.90px;height:17.80px;background:#fbfbfb;border-radius:5.5px;box-shadow:0 0.5px 1.2px rgba(0,0,0,.26),0 0 0 0.5px rgba(0,0,0,.04);"></div>
<svg class="ic" style="left:997.90px;top:538.30px;" width="11.90" height="17.80" viewBox="0 0 11.9 17.8"><path d="M3.15 6.50L5.95 3.40L8.75 6.50M3.15 11.80L5.95 14.90L8.75 11.80" fill="none" stroke="#2e2e2e" stroke-width="1.5" stroke-linecap="round" stroke-linejoin="round"/></svg>
<div class="b " style="left:956.40px;top:566.80px;width:37.80px;height:10.00px;background:#fff;box-shadow:0 0 0 0.5px rgba(0,0,0,.06);"></div>
<div class="b " style="left:997.90px;top:566.00px;width:11.90px;height:17.80px;background:#fbfbfb;border-radius:5.5px;box-shadow:0 0.5px 1.2px rgba(0,0,0,.26),0 0 0 0.5px rgba(0,0,0,.04);"></div>
<svg class="ic" style="left:997.90px;top:566.00px;" width="11.90" height="17.80" viewBox="0 0 11.9 17.8"><path d="M3.15 6.50L5.95 3.40L8.75 6.50M3.15 11.80L5.95 14.90L8.75 11.80" fill="none" stroke="#2e2e2e" stroke-width="1.5" stroke-linecap="round" stroke-linejoin="round"/></svg>
</div>
<svg class="ic" style="left:0.00px;top:0.00px;" width="1024.00" height="570.00" viewBox="0 0 1024 570"><path d="M0 0H5Q0 0 0 5Z M1024 0H1019Q1024 0 1024 5Z M0 570V565.5Q0 570 4.5 570Z M1024 570V565.5Q1024 570 1019.5 570Z" fill="#000"/></svg>
</body></html>
